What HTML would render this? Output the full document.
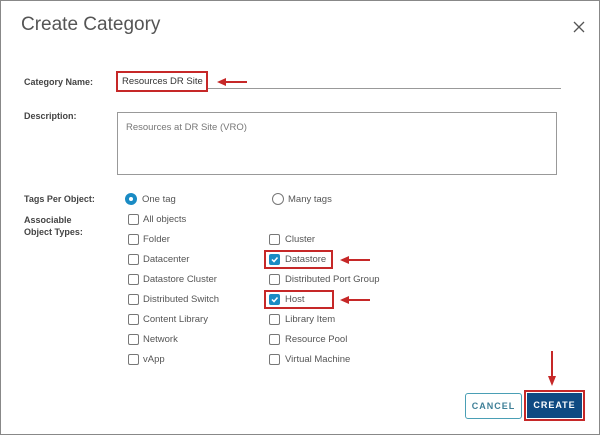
<!DOCTYPE html><html><head><style>
*{margin:0;padding:0;box-sizing:border-box}
body{width:600px;height:435px;background:#fff;font-family:"Liberation Sans",sans-serif;position:relative;overflow:hidden;border:1px solid #888}
.a{position:absolute;white-space:nowrap}
.t{font-size:9.5px;color:#555}
.l{font-size:9px;color:#444;font-weight:bold}
.cb{position:absolute;width:11px;height:11px;border:1px solid #777;border-radius:2px;background:#fff}
.cb.on{background:#1a8bc4;border-color:#1a8bc4}
.rb{position:absolute;border:2px solid #c62828}
</style></head><body>
<div class="a" style="left:20px;top:13px;font-size:19px;color:#555">Create Category</div>
<svg class="a" style="left:572px;top:20px" width="12" height="12"><path d="M1 1L11 11M11 1L1 11" stroke="#555" stroke-width="1.3"/></svg>
<div class="a l" style="left:23px;top:76px">Category Name:</div>
<div class="a" style="left:207px;top:87px;width:353px;height:1px;background:#999"></div>
<div class="rb" style="left:115px;top:70px;width:92px;height:21px"></div>
<div class="a t" style="left:121px;top:75px;color:#333">Resources DR Site</div>
<svg class="a" style="left:216px;top:76px" width="32" height="10"><path d="M2 5H30" stroke="#c62828" stroke-width="2"/><path d="M0 5L9 1V9Z" fill="#c62828"/></svg>
<div class="a l" style="left:23px;top:110px">Description:</div>
<div class="a" style="left:116px;top:111px;width:440px;height:63px;border:1px solid #999"></div>
<div class="a t" style="left:125px;top:121px;color:#777">Resources at DR Site (VRO)</div>
<div class="a l" style="left:23px;top:193px">Tags Per Object:</div>
<div class="a l" style="left:23px;top:213px;line-height:12px">Associable<br>Object Types:</div>
<div class="a" style="left:124px;top:192px;width:12px;height:12px;border-radius:50%;background:#1a8bc4;border:1px solid #1a8bc4"><div style="width:4px;height:4px;background:#fff;border-radius:50%;margin:3px"></div></div>
<div class="a t" style="left:141px;top:193px">One tag</div>
<div class="a" style="left:271px;top:192px;width:12px;height:12px;border-radius:50%;border:1px solid #777"></div>
<div class="a t" style="left:287px;top:193px">Many tags</div>
<div class="cb" style="left:127px;top:213px"></div><div class="a t" style="left:142px;top:213px">All objects</div>
<div class="cb" style="left:127px;top:233px"></div><div class="a t" style="left:142px;top:233px">Folder</div>
<div class="cb" style="left:127px;top:253px"></div><div class="a t" style="left:142px;top:253px">Datacenter</div>
<div class="cb" style="left:127px;top:273px"></div><div class="a t" style="left:142px;top:273px">Datastore Cluster</div>
<div class="cb" style="left:127px;top:293px"></div><div class="a t" style="left:142px;top:293px">Distributed Switch</div>
<div class="cb" style="left:127px;top:313px"></div><div class="a t" style="left:142px;top:313px">Content Library</div>
<div class="cb" style="left:127px;top:333px"></div><div class="a t" style="left:142px;top:333px">Network</div>
<div class="cb" style="left:127px;top:353px"></div><div class="a t" style="left:142px;top:353px">vApp</div>
<div class="cb" style="left:268px;top:233px"></div><div class="a t" style="left:284px;top:233px">Cluster</div>
<div class="cb on" style="left:268px;top:253px"><svg width="9" height="9" style="position:absolute;left:0;top:0"><path d="M2 4.5L4 6.5L7.5 2.5" stroke="#fff" stroke-width="1.5" fill="none"/></svg></div><div class="a t" style="left:284px;top:253px">Datastore</div>
<div class="cb" style="left:268px;top:273px"></div><div class="a t" style="left:284px;top:273px">Distributed Port Group</div>
<div class="cb on" style="left:268px;top:293px"><svg width="9" height="9" style="position:absolute;left:0;top:0"><path d="M2 4.5L4 6.5L7.5 2.5" stroke="#fff" stroke-width="1.5" fill="none"/></svg></div><div class="a t" style="left:284px;top:293px">Host</div>
<div class="cb" style="left:268px;top:313px"></div><div class="a t" style="left:284px;top:313px">Library Item</div>
<div class="cb" style="left:268px;top:333px"></div><div class="a t" style="left:284px;top:333px">Resource Pool</div>
<div class="cb" style="left:268px;top:353px"></div><div class="a t" style="left:284px;top:353px">Virtual Machine</div>
<div class="rb" style="left:263px;top:249px;width:69px;height:19px"></div>
<div class="rb" style="left:263px;top:289px;width:70px;height:19px"></div>
<svg class="a" style="left:339px;top:254px" width="32" height="10"><path d="M2 5H30" stroke="#c62828" stroke-width="2"/><path d="M0 5L9 1V9Z" fill="#c62828"/></svg>
<svg class="a" style="left:339px;top:294px" width="32" height="10"><path d="M2 5H30" stroke="#c62828" stroke-width="2"/><path d="M0 5L9 1V9Z" fill="#c62828"/></svg>
<svg class="a" style="left:546px;top:350px" width="10" height="35"><path d="M5 0V30" stroke="#c62828" stroke-width="2"/><path d="M5 35L1 25H9Z" fill="#c62828"/></svg>
<div class="a" style="left:464px;top:392px;width:57px;height:26px;border:1px solid #4a9fb5;border-radius:3px;color:#3e7f97;font-size:9px;font-weight:bold;letter-spacing:1px;text-align:center;line-height:24px">CANCEL</div>
<div class="a" style="left:523px;top:389px;width:61px;height:31px;border:2px solid #c62828;padding:1px"><div style="background:#0f4a82;height:100%;color:#fff;font-size:9px;font-weight:bold;letter-spacing:1px;text-align:center;line-height:25px">CREATE</div></div>
</body></html>
